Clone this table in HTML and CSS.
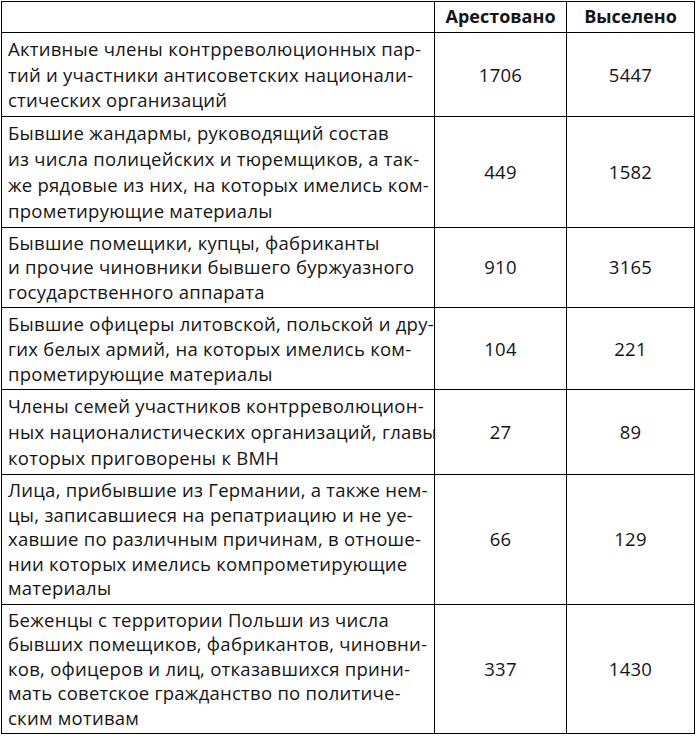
FILE: index.html
```html
<!DOCTYPE html>
<html lang="ru">
<head>
<meta charset="utf-8">
<title>Таблица</title>
<link rel="stylesheet" href="styles.css">
</head>
<body>
<table class="data">
  <colgroup>
    <col class="c-desc">
    <col class="c-num">
    <col class="c-num2">
  </colgroup>
  <thead>
    <tr class="head">
      <th></th>
      <th>Арестовано</th>
      <th>Выселено</th>
    </tr>
  </thead>
  <tbody>
    <tr class="r1">
      <td class="desc">Активные члены контрреволюционных пар-<br>тий и участники антисоветских национали-<br>стических организаций</td>
      <td class="num">1706</td>
      <td class="num">5447</td>
    </tr>
    <tr class="r2">
      <td class="desc">Бывшие жандармы, руководящий состав<br>из числа полицейских и тюремщиков, а так-<br>же рядовые из них, на которых имелись ком-<br>прометирующие материалы</td>
      <td class="num">449</td>
      <td class="num">1582</td>
    </tr>
    <tr class="r3">
      <td class="desc">Бывшие помещики, купцы, фабриканты<br>и прочие чиновники бывшего буржуазного<br>государственного аппарата</td>
      <td class="num">910</td>
      <td class="num">3165</td>
    </tr>
    <tr class="r4">
      <td class="desc">Бывшие офицеры литовской, польской и дру-<br>гих белых армий, на которых имелись ком-<br>прометирующие материалы</td>
      <td class="num">104</td>
      <td class="num">221</td>
    </tr>
    <tr class="r5">
      <td class="desc">Члены семей участников контрреволюцион-<br>ных националистических организаций, главы<br>которых приговорены к ВМН</td>
      <td class="num">27</td>
      <td class="num">89</td>
    </tr>
    <tr class="r6">
      <td class="desc">Лица, прибывшие из Германии, а также нем-<br>цы, записавшиеся на репатриацию и не уе-<br>хавшие по различным причинам, в отноше-<br>нии которых имелись компрометирующие<br>материалы</td>
      <td class="num">66</td>
      <td class="num">129</td>
    </tr>
    <tr class="r7">
      <td class="desc">Беженцы с территории Польши из числа<br>бывших помещиков, фабрикантов, чиновни-<br>ков, офицеров и лиц, отказавшихся прини-<br>мать советское гражданство по политиче-<br>ским мотивам</td>
      <td class="num">337</td>
      <td class="num">1430</td>
    </tr>
  </tbody>
</table>
</body>
</html>
```

FILE: styles.css
```css
html, body {
  margin: 0;
  padding: 0;
  background: #ffffff;
}

body {
  padding: 1px 0 0 1px;
  font-family: "Open Sans", "Noto Sans", sans-serif;
  color: #151515;
}

.data {
  border-collapse: collapse;
  table-layout: fixed;
  width: 693px;
  font-size: 18.5px;
  letter-spacing: 0.25px;
}

.c-desc { width: 433px; }
.c-num { width: 132px; }
.c-num2 { width: 128px; }

.data th,
.data td {
  border: 1px solid #000;
  padding: 3px 6px;
  line-height: 25px;
  vertical-align: middle;
}

.data th {
  height: 25px;
  font-size: 18px;
  font-weight: 700;
  letter-spacing: 0;
  text-align: center;
  padding: 2px 4px 3px;
}

.r1 td { line-height: 25.5px; }
.r2 td { line-height: 26px; }
.r3 td { line-height: 24.5px; }
.r5 td { line-height: 26px; }
.r6 td,
.r7 td { line-height: 24.5px; }

.desc {
  text-align: left;
  white-space: nowrap;
}

.num {
  text-align: center;
}
```
